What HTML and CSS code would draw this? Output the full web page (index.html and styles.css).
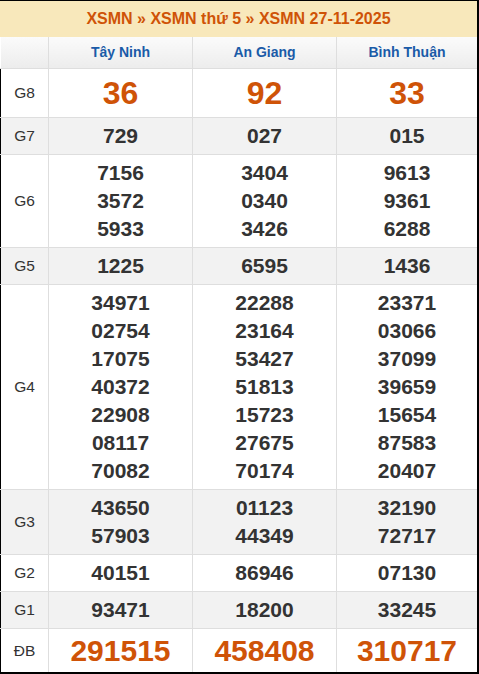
FILE: index.html
```html
<!DOCTYPE html>
<html lang="vi">
<head>
<meta charset="utf-8">
<link rel="stylesheet" href="styles.css">
</head>
<body>
<div class="board">
  <div class="title">XSMN » XSMN thứ 5 » XSMN 27-11-2025</div>
  <table class="results">
    <colgroup><col class="c-label"><col class="c-prov"><col class="c-prov"><col></colgroup>
    <thead>
      <tr class="prov-row"><th></th><th>Tây Ninh</th><th>An Giang</th><th>Bình Thuận</th></tr>
    </thead>
    <tbody>
      <tr class="g8"><td class="label">G8</td><td class="big">36</td><td class="big">92</td><td class="big">33</td></tr>
      <tr class="alt"><td class="label">G7</td><td>729</td><td>027</td><td>015</td></tr>
      <tr><td class="label">G6</td><td>7156<br>3572<br>5933</td><td>3404<br>0340<br>3426</td><td>9613<br>9361<br>6288</td></tr>
      <tr class="alt"><td class="label">G5</td><td>1225</td><td>6595</td><td>1436</td></tr>
      <tr><td class="label">G4</td><td>34971<br>02754<br>17075<br>40372<br>22908<br>08117<br>70082</td><td>22288<br>23164<br>53427<br>51813<br>15723<br>27675<br>70174</td><td>23371<br>03066<br>37099<br>39659<br>15654<br>87583<br>20407</td></tr>
      <tr class="alt"><td class="label">G3</td><td>43650<br>57903</td><td>01123<br>44349</td><td>32190<br>72717</td></tr>
      <tr><td class="label">G2</td><td>40151</td><td>86946</td><td>07130</td></tr>
      <tr class="alt"><td class="label">G1</td><td>93471</td><td>18200</td><td>33245</td></tr>
      <tr class="db"><td class="label">ĐB</td><td class="big">291515</td><td class="big">458408</td><td class="big">310717</td></tr>
    </tbody>
  </table>
</div>
</body>
</html>
```

FILE: styles.css
```css
html, body {
  margin: 0;
  padding: 0;
  background: #fff;
}
body {
  font-family: "Liberation Sans", Arial, sans-serif;
  color: #333;
}
.board {
  width: 479px;
  height: 674px;
  box-sizing: border-box;
  border-top: 1px solid #000;
  border-right: 2px solid #000;
  border-bottom: 2px solid #000;
  overflow: hidden;
}
.title {
  height: 36px;
  background: #f8e8bb;
  color: #cf5307;
  font-weight: bold;
  font-size: 16px;
  line-height: 36px;
  text-align: center;
}
.results {
  width: 477px;
  table-layout: fixed;
  border-collapse: collapse;
}
.c-label { width: 48px; }
.c-prov { width: 144px; }
.results th,
.results td {
  border: 1px solid #dedede;
  text-align: center;
  vertical-align: middle;
  padding: 4px 0;
}
.results tr > :first-child { border-left: none; }
.results tr > :last-child { border-right: none; }
.prov-row th {
  height: 23px;
  padding: 4px 0 4px;
  border-top: none;
  background: linear-gradient(#fbfbfb, #ececec);
  color: #1a5ba8;
  font-size: 14px;
  font-weight: bold;
  line-height: 23px;
}
.results tbody td {
  font-size: 21px;
  font-weight: bold;
  line-height: 28px;
  color: #333;
}
.results tbody td.label {
  font-size: 15.5px;
  font-weight: normal;
  border-left: 1px solid #000;
  color: #333;
}
.results tbody tr.alt td { background: #f2f2f2; }
.results tbody td.big {
  color: #cf5307;
}
.g8 td.big {
  font-size: 32px;
  line-height: 40px;
}
.db td.big {
  font-size: 30px;
  line-height: 35px;
}
.results tbody tr.db td { border-bottom: none; }
```
